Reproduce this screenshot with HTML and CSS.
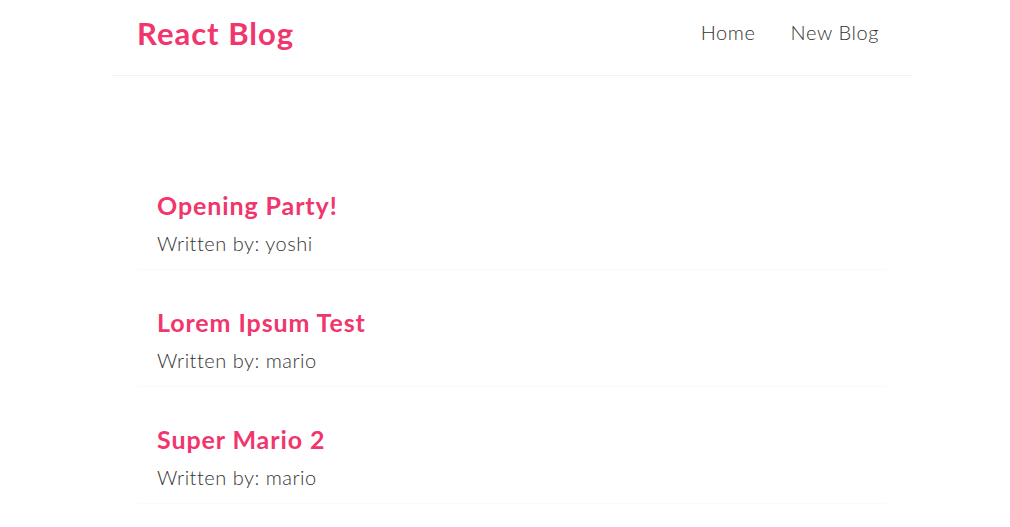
FILE: index.html
```html
<!DOCTYPE html>
<html lang="en">
<head>
<meta charset="utf-8">
<title>React Blog</title>
<link rel="stylesheet" href="styles.css">
</head>
<body>
<div class="app">
  <nav class="navbar">
    <h1 class="brand">React Blog</h1>
    <div class="links">
      <a href="#" class="link">Home</a>
      <a href="#" class="link">New Blog</a>
    </div>
  </nav>
  <main class="content">
    <div class="blog-preview">
      <h2 class="blog-title">Opening Party!</h2>
      <p class="blog-author">Written by: yoshi</p>
    </div>
    <div class="blog-preview">
      <h2 class="blog-title">Lorem Ipsum Test</h2>
      <p class="blog-author">Written by: mario</p>
    </div>
    <div class="blog-preview">
      <h2 class="blog-title">Super Mario 2</h2>
      <p class="blog-author">Written by: mario</p>
    </div>
  </main>
</div>
</body>
</html>
```
FILE: styles.css
```css
* {
  margin: 0;
  box-sizing: border-box;
}
body {
  padding-left: 14px;
  font-family: "Lato", "Noto Sans", sans-serif;
  color: #333;
  background: #fff;
}
.app {
  width: 800px;
  margin: 0 auto;
}
.navbar {
  height: 76px;
  padding: 0 25px 10px;
  display: flex;
  align-items: center;
  border-bottom: 1px solid #f2f2f2;
}
.brand {
  font-size: 31px;
  line-height: 38px;
  font-weight: 700;
  letter-spacing: 1px;
  color: #f1356d;
}
.links {
  margin-left: auto;
  display: flex;
  gap: 19px;
}
.link {
  font-size: 20px;
  line-height: 25px;
  font-weight: 300;
  letter-spacing: 0.6px;
  padding: 7px 8px;
  color: #333;
  text-decoration: none;
}
.content {
  padding: 102px 25px 0;
}
.blog-preview {
  padding: 12px 20px 13px;
  margin-bottom: 25px;
  border-bottom: 1px solid #fafafa;
}
.blog-title {
  font-size: 25px;
  line-height: 31px;
  font-weight: 700;
  letter-spacing: 0.9px;
  color: #f1356d;
  margin-bottom: 10px;
}
.blog-author {
  font-size: 20px;
  line-height: 25px;
  font-weight: 300;
  letter-spacing: 0.5px;
  color: #333;
}
```
